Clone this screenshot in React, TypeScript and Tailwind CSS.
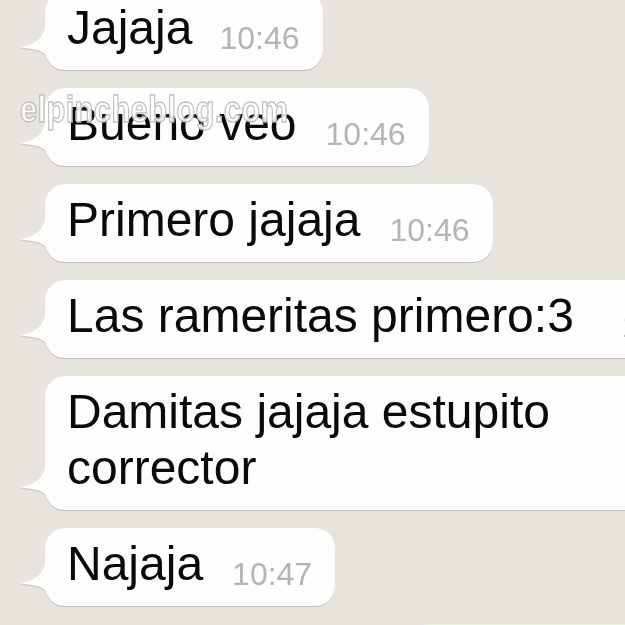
import React from "react";

function Tail() {
  return (
    <svg
      className="absolute left-[-26px] bottom-0 h-[46px] w-[30px]"
      viewBox="0 0 30 46"
      aria-hidden="true"
    >
      <path
        d="M26,0 C26,13 17,21 1,23 C9,25 18,25 23,28 C25,29 26,30 27,32 L30,32 L30,0 Z"
        fill="#fdfdfd"
      />
    </svg>
  );
}

function Time({ t, ml }: { t: string; ml: string }) {
  return (
    <span
      className={`${ml} inline-block align-[-5px] text-[32px] leading-none text-[#b4b4b4]`}
    >
      {t}
    </span>
  );
}

function Bubble({ children }: { children: React.ReactNode }) {
  return (
    <div className="relative ml-[45px] w-fit rounded-[20px] bg-[#fdfdfd] pl-[22px] pr-[23px] pt-[8px] pb-[14px] drop-shadow-[0_1.5px_0.5px_rgba(0,0,0,0.16)]">
      <Tail />
      <div className="whitespace-nowrap text-[48px] leading-[56px] text-[#0a0a0a]">
        {children}
      </div>
    </div>
  );
}

export default function App() {
  return (
    <div
      className="relative h-[625px] w-[625px] overflow-hidden bg-[#e7e4dd]"
      style={{ fontFamily: '"Liberation Sans", Arial, sans-serif' }}
    >
      <div className="mt-[-8px] flex flex-col gap-[18px]">
        <Bubble>
          Jajaja
          <Time t="10:46" ml="ml-[27px]" />
        </Bubble>
        <Bubble>
          Bueno veo
          <Time t="10:46" ml="ml-[29px]" />
        </Bubble>
        <Bubble>
          Primero jajaja
          <Time t="10:46" ml="ml-[29px]" />
        </Bubble>
        <Bubble>
          Las rameritas primero:3
          <Time t="10:46" ml="ml-[48px]" />
        </Bubble>
        <div className="relative ml-[45px] w-[760px] rounded-[20px] bg-[#fdfdfd] pl-[22px] pr-[23px] pt-[8px] pb-[14px] drop-shadow-[0_1.5px_0.5px_rgba(0,0,0,0.16)]">
          <Tail />
          <div className="flex items-end text-[48px] leading-[56px] text-[#0a0a0a]">
            <div className="w-[530px]">Damitas jajaja estupito corrector</div>
            <div className="mb-[6px] ml-[27px] text-[32px] leading-none text-[#b4b4b4]">
              10:46
            </div>
          </div>
        </div>
        <Bubble>
          Najaja
          <Time t="10:47" ml="ml-[29px]" />
        </Bubble>
        <div className="ml-[410px] h-[60px] w-[260px] rounded-[20px] bg-[#e3f6d0]" />
      </div>

      <div
        className="pointer-events-none absolute left-[20px] top-[97px] origin-bottom scale-y-[1.2] text-[31px] font-bold leading-[31px] tracking-[0.3px] text-white opacity-90 [-webkit-text-stroke:1.2px_#bcbcbc]"
        style={{ fontFamily: '"Liberation Sans", Arial, sans-serif' }}
      >
        elpincheblog.com
      </div>
    </div>
  );
}
